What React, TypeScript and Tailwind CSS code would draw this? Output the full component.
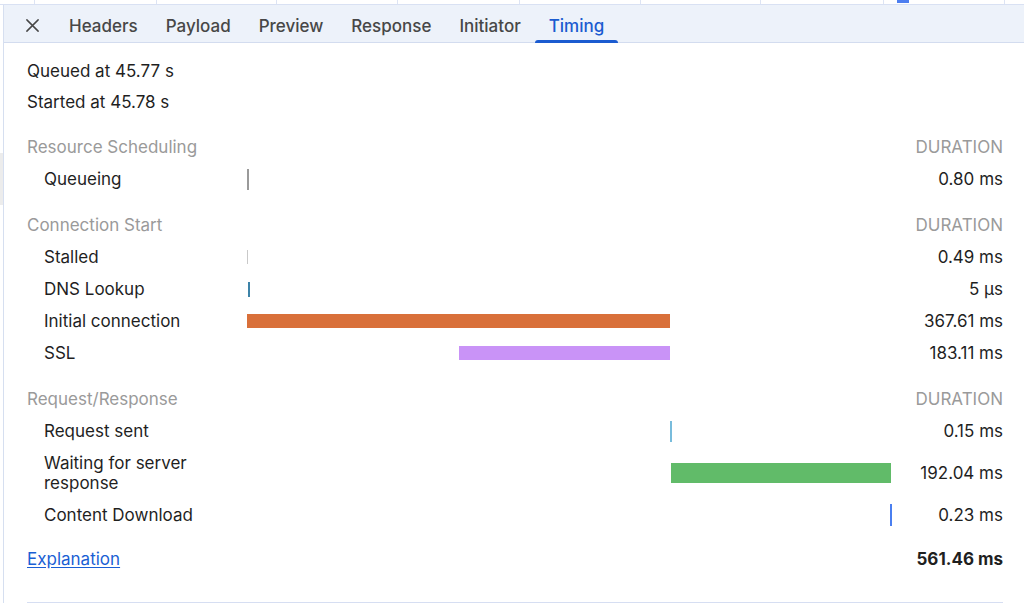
const tabs = ['Headers', 'Payload', 'Preview', 'Response', 'Initiator', 'Timing'];

const SCALE = 645 / 561.46; // px per ms on the timeline

interface Row {
  label: string;
  start: number;
  dur: number;
  color: string;
  h: string;
  minW: number;
  value: string;
  tall?: boolean;
}

const sections: { title: string; rows: Row[] }[] = [
  {
    title: 'Resource Scheduling',
    rows: [{ label: 'Queueing', start: 0, dur: 0.8, color: 'bg-[#9a9a9a]', h: 'h-[21px]', minW: 2, value: '0.80 ms' }],
  },
  {
    title: 'Connection Start',
    rows: [
      { label: 'Stalled', start: 0.4, dur: 0.49, color: 'bg-[#c9c9c9]', h: 'h-[14px]', minW: 1, value: '0.49 ms' },
      { label: 'DNS Lookup', start: 0.6, dur: 0.005, color: 'bg-[#3d83a8]', h: 'h-[15px]', minW: 2, value: '5 µs' },
      { label: 'Initial connection', start: 0.4, dur: 367.61, color: 'bg-[#d9703a]', h: 'h-[14px]', minW: 2, value: '367.61 ms' },
      { label: 'SSL', start: 184.9, dur: 183.11, color: 'bg-[#c993f7]', h: 'h-[14px]', minW: 2, value: '183.11 ms' },
    ],
  },
  {
    title: 'Request/Response',
    rows: [
      { label: 'Request sent', start: 368.0, dur: 0.15, color: 'bg-[#78bcdc]', h: 'h-[21px]', minW: 2, value: '0.15 ms' },
      { label: 'Waiting for server response', start: 368.9, dur: 192.04, color: 'bg-[#61bb69]', h: 'h-[20px]', minW: 2, value: '192.04 ms', tall: true },
      { label: 'Content Download', start: 560.0, dur: 0.23, color: 'bg-[#4a7ff0]', h: 'h-[22px]', minW: 2, value: '0.23 ms' },
    ],
  },
];

const topLines = [34, 156, 276, 397, 519, 640, 760, 883, 1004];

function TimingRow({ row }: { row: Row }) {
  return (
    <div className={`flex ${row.tall ? 'h-[52px]' : 'h-8'}`}>
      <div className="w-[220px] shrink-0 pl-[17px] flex items-center">
        <span className={row.tall ? 'w-[160px]' : ''}>{row.label}</span>
      </div>
      <div className="w-[645px] shrink-0 flex items-center">
        <div
          className={`shrink-0 ${row.color} ${row.h}`}
          style={{ marginLeft: row.start * SCALE, width: Math.max(row.dur * SCALE, row.minW) }}
        />
      </div>
      <div className="flex-1 flex items-center justify-end">{row.value}</div>
    </div>
  );
}

export default function App() {
  return (
    <div className="w-[1024px] h-[612px] overflow-hidden bg-white text-[17px] leading-5 text-[#1f1f1f] font-['Inter',sans-serif]">
      {/* strip of the table above */}
      <div className="relative h-[5px] border-b border-[#d9e1f3]">
        {topLines.map((x) => (
          <div key={x} className="absolute top-0 h-[4px] w-px bg-[#dde4f4]" style={{ left: x }} />
        ))}
        <div className="absolute top-0 left-[897px] h-[3px] w-[12px] bg-[#4d7ef0]" />
      </div>

      <div className="flex">
        <div className="w-[3px] flex flex-col">
          <div className="h-[148px]" />
          <div className="h-[52px] bg-[#ececec]" />
        </div>
        <div className="flex-1 border-l border-[#d6dff0]">
          {/* tabs */}
          <div className="h-[38px] pt-[4px] flex items-stretch bg-[#edf2fa] border-b border-[#d3dcef]">
            <div className="ml-[21px] mr-[15px] w-[15px] flex items-center">
              <svg viewBox="0 0 16 16" className="w-[15px] h-[15px]" fill="none" stroke="#474747" strokeWidth={1.6} strokeLinecap="round">
                <path d="M2 2l12 12M14 2L2 14" />
              </svg>
            </div>
            {tabs.map((t) => (
              <div
                key={t}
                className={`relative px-[14px] flex items-center font-medium ${t === 'Timing' ? 'text-[#1b5bd0]' : 'text-[#474747]'}`}
              >
                {t}
                {t === 'Timing' && (
                  <div className="absolute left-0 right-0 -bottom-px h-[3px] rounded-t-[3px] bg-[#1b5bd0]" />
                )}
              </div>
            ))}
          </div>

          <div className="pl-[23px] pr-[21px] pt-[12px]">
            <div className="h-[31px] flex items-center">Queued at 45.77 s</div>
            <div className="h-[31px] flex items-center">Started at 45.78 s</div>

            {sections.map((s) => (
              <div key={s.title} className="mt-[14px]">
                <div className="h-8 flex items-center justify-between text-[#9a9a9a]">
                  <span>{s.title}</span>
                  <span>DURATION</span>
                </div>
                {s.rows.map((r) => (
                  <TimingRow key={r.label} row={r} />
                ))}
              </div>
            ))}

            <div className="mt-[12px] h-8 flex items-center justify-between">
              <a href="#" className="text-[#1a5fd4] underline underline-offset-2">Explanation</a>
              <span className="font-bold">561.46 ms</span>
            </div>
            <div className="mt-[27px] border-t border-[#d6def2]" />
          </div>
        </div>
      </div>
    </div>
  );
}
